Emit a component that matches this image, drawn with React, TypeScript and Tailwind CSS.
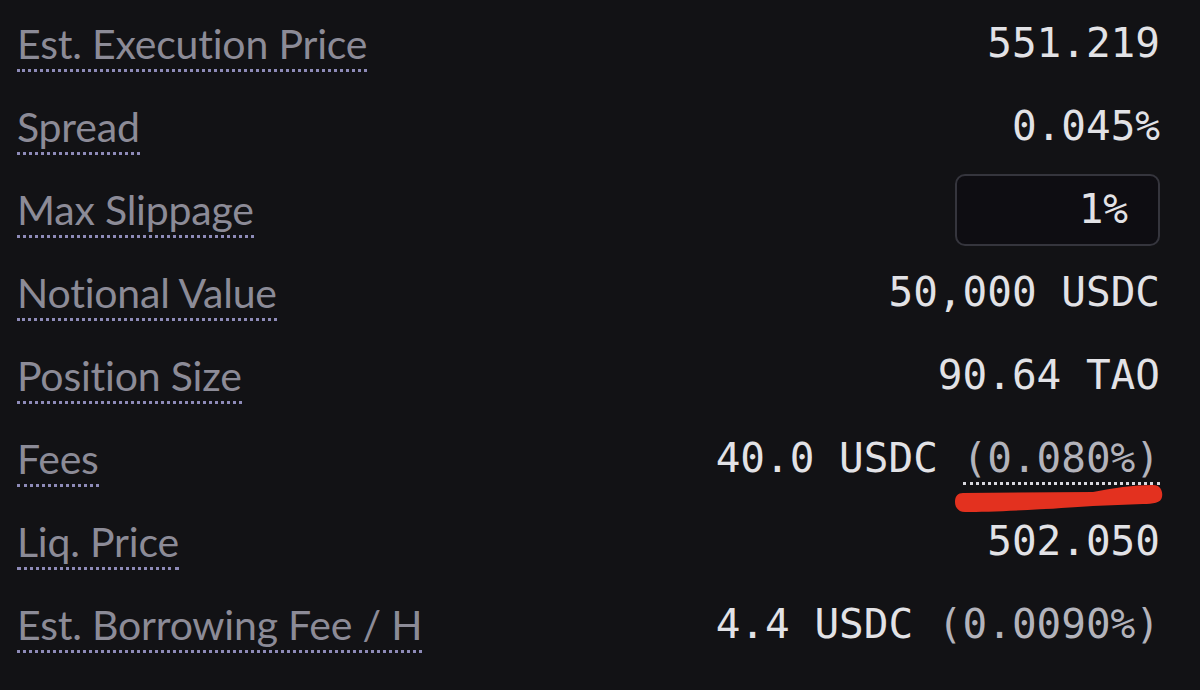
import React from "react";

type Row = {
  label: string;
  value: React.ReactNode;
};

const Label = ({ children }: { children: React.ReactNode }) => (
  <span className="border-b-[3px] border-dotted border-[#8e8bb8] pb-[1px] leading-[1.1] text-[#8c8b97]">
    {children}
  </span>
);

const rows: Row[] = [
  { label: "Est. Execution Price", value: "551.219" },
  { label: "Spread", value: "0.045%" },
  {
    label: "Max Slippage",
    value: (
      <div className="flex h-[72px] w-[205px] items-center justify-end rounded-[10px] border-2 border-[#35353d] bg-[#0e0d12] pr-[30px]">
        1%
      </div>
    ),
  },
  { label: "Notional Value", value: "50,000 USDC" },
  { label: "Position Size", value: "90.64 TAO" },
  {
    label: "Fees",
    value: (
      <span className="relative">
        40.0 USDC{" "}
        <span className="border-b-[3px] border-dotted border-[#d8d8de] text-[#b3b3bb]">
          (0.080%)
        </span>
        {/* red marker stroke from the screenshot */}
        <svg
          className="absolute right-[-3px] top-[50px]"
          width="210"
          height="30"
          viewBox="0 0 210 30"
        >
          <path
            d="M10 9 L140 8 C160 4 180 1 200 1 C208 1 210 8 209 13 C208 19 200 20 190 20 L140 22 C100 25 40 28 12 28 C5 28 2 23 2 18 C2 12 5 9 10 9 Z"
            fill="#e3311f"
          />
        </svg>
      </span>
    ),
  },
  { label: "Liq. Price", value: "502.050" },
  {
    label: "Est. Borrowing Fee / H",
    value: (
      <span>
        4.4 USDC <span className="text-[#b3b3bb]">(0.0090%)</span>
      </span>
    ),
  },
];

export default function App() {
  return (
    <div className="h-[690px] w-[1200px] overflow-hidden bg-[#121215] pt-[2px]">
      {rows.map((r) => (
        <div
          key={r.label}
          className="flex h-[83px] items-center justify-between pl-[17px] pr-[40px]"
        >
          <span className="font-['Lato',sans-serif] text-[41px] tracking-[-0.2px]">
            <Label>{r.label}</Label>
          </span>
          <div className="font-['DejaVu_Sans_Mono',monospace] text-[41px] text-[#e2e2e6]">
            {r.value}
          </div>
        </div>
      ))}
    </div>
  );
}
